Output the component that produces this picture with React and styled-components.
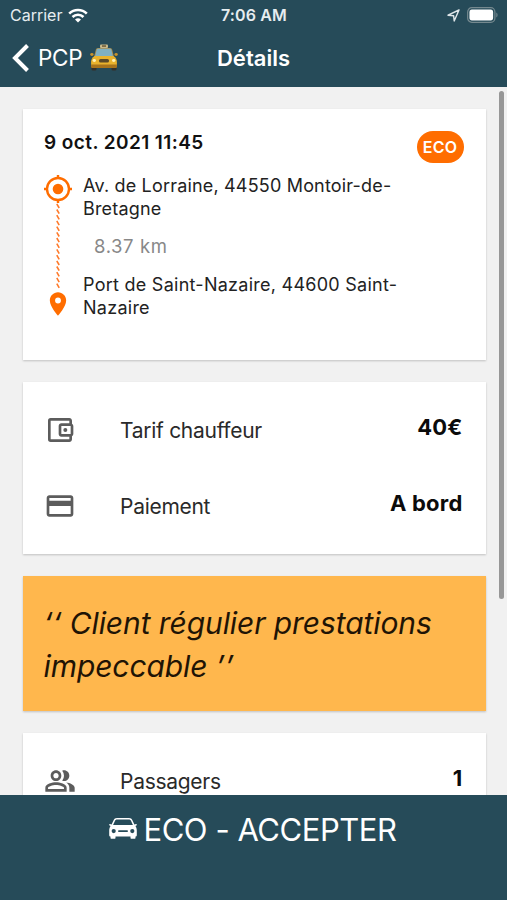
import React from 'react';
import styled, { createGlobalStyle } from 'styled-components';
import {
    MdOutlineAccountBalanceWallet,
    MdCreditCard,
    MdOutlinePeopleAlt,
    MdPlace,
} from 'react-icons/md';

const GlobalStyle = createGlobalStyle`
    * { box-sizing: border-box; }
    body {
        margin: 0;
        font-family: Inter, "Liberation Sans", sans-serif;
        background: #f1f1f1;
    }
    svg { display: block; flex: none; }
`;

const Screen = styled.div`
    position: relative;
    display: flex;
    flex-direction: column;
    width: 507px;
    height: 900px;
    overflow: hidden;
    background: #f1f1f1;
`;

const TopBar = styled.header`
    flex: none;
    height: 87px;
    background: #264b59;
    color: #fff;
`;

const StatusBar = styled.div`
    display: grid;
    grid-template-columns: 1fr auto 1fr;
    align-items: center;
    height: 30px;
    padding: 0 9px 0 10px;
    font-size: 16px;
    color: #e6edf0;
`;

const Carrier = styled.div`
    display: flex;
    align-items: center;
    gap: 6px;
`;

const Clock = styled.div`
    font-weight: 600;
    letter-spacing: 0.15px;
`;

const StatusIcons = styled.div`
    display: flex;
    justify-content: flex-end;
    align-items: center;
    gap: 7px;
`;

const NavBar = styled.div`
    display: grid;
    grid-template-columns: 1fr auto 1fr;
    align-items: center;
    height: 55px;
    padding: 0 12px;
`;

const Back = styled.div`
    display: flex;
    align-items: center;
    font-size: 22.5px;
    line-height: 30px;
    letter-spacing: -0.3px;

    span { margin: 0 8px; }
`;

const Title = styled.h1`
    margin: 0;
    font-size: 22px;
    font-weight: 600;
    line-height: 28px;
`;

const Content = styled.main`
    flex: 1;
    min-height: 0;
    overflow: hidden;
    display: flex;
    flex-direction: column;
    gap: 22px;
    padding: 22px 21.5px 0 22.5px;
`;

const Card = styled.section`
    flex: none;
    height: ${(p) => p.$height}px;
    padding: ${(p) => p.$padding || '9.5px 23px 0 21px'};
    background: ${(p) => p.$color || '#fff'};
    box-shadow: 0 1px 2px rgba(0, 0, 0, 0.2);
`;

const CardHead = styled.div`
    display: flex;
    justify-content: space-between;
    height: 44px;
`;

const DateText = styled.div`
    font-size: 19px;
    font-weight: 600;
    line-height: 23px;
    letter-spacing: 0.42px;
    color: #111;
`;

const Badge = styled.span`
    width: 47px;
    height: 32px;
    border-radius: 16px;
    background: #ff6d00;
    color: #fff;
    font-size: 16px;
    font-weight: 600;
    line-height: 32px;
    text-align: center;
    letter-spacing: 0.2px;
`;

const Trip = styled.div`
    display: flex;
    gap: 11px;
`;

const Track = styled.div`
    display: flex;
    flex-direction: column;
    align-items: center;
    width: 28px;
    color: #ff6d00;
`;

const Stops = styled.div`
    margin-top: -1px;
    font-size: 18px;
    line-height: 23px;
    color: #222;
`;

const Stop = styled.div`
    white-space: pre-line;
    letter-spacing: ${(p) => p.$spacing || 0}px;
`;

const Distance = styled.div`
    padding: 15px 0 15px 11px;
    font-size: 18.5px;
    letter-spacing: 0.6px;
    color: #888;
`;

const Row = styled.div`
    display: flex;
    align-items: center;
    height: 76px;
    color: #5c5c5c;
`;

const Label = styled.div`
    flex: 1;
    margin-left: 44.5px;
    padding-top: 1px;
    font-size: 21px;
    letter-spacing: -0.28px;
    color: #2a2a2a;
`;

const Value = styled.div`
    padding-bottom: 6px;
    font-size: 22px;
    font-weight: 700;
    letter-spacing: 0.2px;
    color: #0b0b0b;
`;

const Quote = styled.p`
    margin: 0;
    font-size: 30px;
    font-style: italic;
    line-height: 43px;
    letter-spacing: -0.09px;
    white-space: pre-line;
    color: #1f1405;
`;

const AcceptButton = styled.button`
    flex: none;
    display: flex;
    justify-content: center;
    align-items: flex-start;
    gap: 6px;
    height: 105px;
    padding: 16px 1px 0 0;
    border: 0;
    background: #264b59;
    color: #fff;
    font: 400 31px/38px Inter, "Liberation Sans", sans-serif;
    letter-spacing: -0.45px;

    svg { margin-top: 7px; }
`;

const ScrollThumb = styled.div`
    position: absolute;
    top: 91px;
    right: 3.5px;
    width: 5px;
    height: 508px;
    border-radius: 3px;
    background: #979797;
`;

const WifiIcon = () => (
    <svg width="20" height="15" viewBox="0 0 20 15" fill="none" stroke="#fff" strokeWidth="2.6">
        <path d="M1.2 5.6a12.4 12.4 0 0 1 17.6 0" />
        <path d="M4.5 9a7.8 7.8 0 0 1 11 0" />
        <path d="M10 14.6 7 11.6a4.3 4.3 0 0 1 6 0z" fill="#fff" stroke="none" />
    </svg>
);

const LocationArrow = () => (
    <svg width="13" height="13" viewBox="0 0 13 13" fill="none" stroke="#dfe7ea" strokeWidth="1.4" strokeLinejoin="round">
        <path d="M12 1 1 6.2l5.6.5.6 5.3z" />
    </svg>
);

const Battery = () => (
    <svg width="31" height="16" viewBox="0 0 33 16" preserveAspectRatio="none">
        <rect x="0.7" y="0.7" width="29" height="14.6" rx="4.4" fill="none" stroke="#75898f" strokeWidth="1.3" />
        <rect x="2.6" y="2.6" width="25.2" height="10.8" rx="2.6" fill="#fff" />
        <path d="M31.2 5.5v5c1.8-.9 1.8-4.1 0-5z" fill="#75898f" />
    </svg>
);

const Chevron = () => (
    <svg width="18" height="28" viewBox="0 0 18 28" fill="none" stroke="#fff" strokeWidth="4">
        <path d="M15.5 1.5 3 14l12.5 12.5" />
    </svg>
);

const TaxiIcon = () => (
    <svg width="28" height="27" viewBox="0 0 28 27">
        <rect x="10" y="0.5" width="8" height="3.5" rx="1" fill="#c9b98a" />
        <rect x="12" y="1.3" width="4" height="1.5" fill="#6b5a37" />
        <rect x="1.5" y="21" width="5" height="5.5" rx="1.5" fill="#33302a" />
        <rect x="21.5" y="21" width="5" height="5.5" rx="1.5" fill="#33302a" />
        <path d="M8 4h12c1.2 0 1.8.7 2.200 1.800L24 13H4l1.800-7.200C6.200 4.700 6.800 4 8 4z" fill="#a98d4c" />
        <path d="M8.300 4.800h11.400c1 0 1.400.5 1.700 1.300L23 13H5l1.600-6.900c.3-.8.700-1.300 1.700-1.300z" fill="#7fb0c2" />
        <ellipse cx="1.9" cy="10.5" rx="1.7" ry="1.4" fill="#c8922a" />
        <ellipse cx="26.1" cy="10.5" rx="1.7" ry="1.4" fill="#c8922a" />
        <path d="M4.500 12h19c2.400 1.600 3.400 3.500 3.400 6v3.500c0 1-.6 1.500-1.500 1.500H2.600c-.9 0-1.500-.5-1.500-1.500V18c0-2.500 1-4.400 3.400-6z" fill="#e9b32d" />
        <path d="M1.100 20.500h25.800V23c0 .7-.5 1-1.200 1H2.300c-.7 0-1.200-.3-1.200-1z" fill="#a8741c" />
        <rect x="9" y="15" width="10" height="3.6" rx="1.6" fill="#5b4a28" />
        <ellipse cx="4.300" cy="16.500" rx="1.700" ry="1.400" fill="#fff3b8" />
        <ellipse cx="23.700" cy="16.500" rx="1.700" ry="1.400" fill="#fff3b8" />
    </svg>
);

const TargetIcon = () => (
    <svg width="28" height="28" viewBox="0 0 28 28" fill="none" stroke="#ff6d00" strokeWidth="2.4">
        <circle cx="14" cy="14" r="11" />
        <circle cx="14" cy="14" r="5.3" fill="#ff6d00" stroke="none" />
        <path d="M14 0v3M14 25v3M0 14h3M25 14h3" />
    </svg>
);

const Dashes = () => (
    <svg width="6" height="87" viewBox="0 0 6 87" stroke="#ff7a2b" strokeWidth="1.6">
        {Array.from({ length: 15 }, (_, i) => (
            <path key={i} d={`M1.8 ${i * 5.7 + 0.8}l2.400 4.200`} />
        ))}
    </svg>
);

const CarIcon = () => (
    <svg width="28" height="21" viewBox="0 0 28 21">
        <path
            fill="#fff"
            fillRule="evenodd"
            d="M8 0h12c1.700 0 2.700.8 3.400 2.200l2 4.300 1.600-.5c.8-.2 1.200.9.400 1.400l-1 .6c1 1.500 1.400 2.800 1.400 4.500V17c0 1-.5 1.500-1.400 1.500H1.600C.7 18.500.2 18 .2 17v-4.500c0-1.700.4-3 1.400-4.500l-1-.6C-.2 6.900.2 5.800 1 6l1.600.5 2-4.300C5.300.8 6.300 0 8 0zm.2 1.500C7 1.500 6.400 2 5.900 3L4.100 7h19.800l-1.800-4c-.5-1-1.100-1.500-2.300-1.500zM4.700 11a2.100 2.100 0 1 0 0 4.200 2.100 2.100 0 0 0 0-4.200zm18.600 0a2.100 2.100 0 1 0 0 4.200 2.100 2.100 0 0 0 0-4.200zM9.800 12.300c-1 0-1 1.800 0 1.800h8.400c1 0 1-1.800 0-1.800z"
        />
        <path fill="#fff" d="M1.500 18h5v1.800c0 .7-.3 1-1 1h-3c-.7 0-1-.3-1-1zM21.500 18h5v1.800c0 .7-.3 1-1 1h-3c-.7 0-1-.3-1-1z" />
    </svg>
);

const InfoRow = ({ icon: Icon, label, value }) => (
    <Row>
        <Icon size={32} />
        <Label>{label}</Label>
        <Value>{value}</Value>
    </Row>
);

export default function App() {
    return (
        <Screen>
            <GlobalStyle />
            <TopBar>
                <StatusBar>
                    <Carrier>Carrier <WifiIcon /></Carrier>
                    <Clock>7:06 AM</Clock>
                    <StatusIcons>
                        <LocationArrow />
                        <Battery />
                    </StatusIcons>
                </StatusBar>
                <NavBar>
                    <Back>
                        <Chevron />
                        <span>PCP</span>
                        <TaxiIcon />
                    </Back>
                    <Title>Détails</Title>
                </NavBar>
            </TopBar>
            <Content>
                <Card $height={251.4} $padding="21.6px 22px 0 21.5px">
                    <CardHead>
                        <DateText>9 oct. 2021 11:45</DateText>
                        <Badge>ECO</Badge>
                    </CardHead>
                    <Trip>
                        <Track>
                            <TargetIcon />
                            <Dashes />
                            <MdPlace size={28} />
                        </Track>
                        <Stops>
                            <Stop $spacing={0.18}>{'Av. de Lorraine, 44550 Montoir-de-\nBretagne'}</Stop>
                            <Distance>8.37 km</Distance>
                            <Stop $spacing={0.26}>{'Port de Saint-Nazaire, 44600 Saint-\nNazaire'}</Stop>
                        </Stops>
                    </Trip>
                </Card>
                <Card $height={172}>
                    <InfoRow icon={MdOutlineAccountBalanceWallet} label="Tarif chauffeur" value="40€" />
                    <InfoRow icon={MdCreditCard} label="Paiement" value="A bord" />
                </Card>
                <Card $height={135} $padding="26px 21px" $color="#ffb74d">
                    <Quote>{'‘‘ Client régulier prestations\nimpeccable ’’'}</Quote>
                </Card>
                <Card $height={172}>
                    <InfoRow icon={MdOutlinePeopleAlt} label="Passagers" value="1" />
                </Card>
            </Content>
            <AcceptButton>
                <CarIcon />
                ECO - ACCEPTER
            </AcceptButton>
            <ScrollThumb />
        </Screen>
    );
}
